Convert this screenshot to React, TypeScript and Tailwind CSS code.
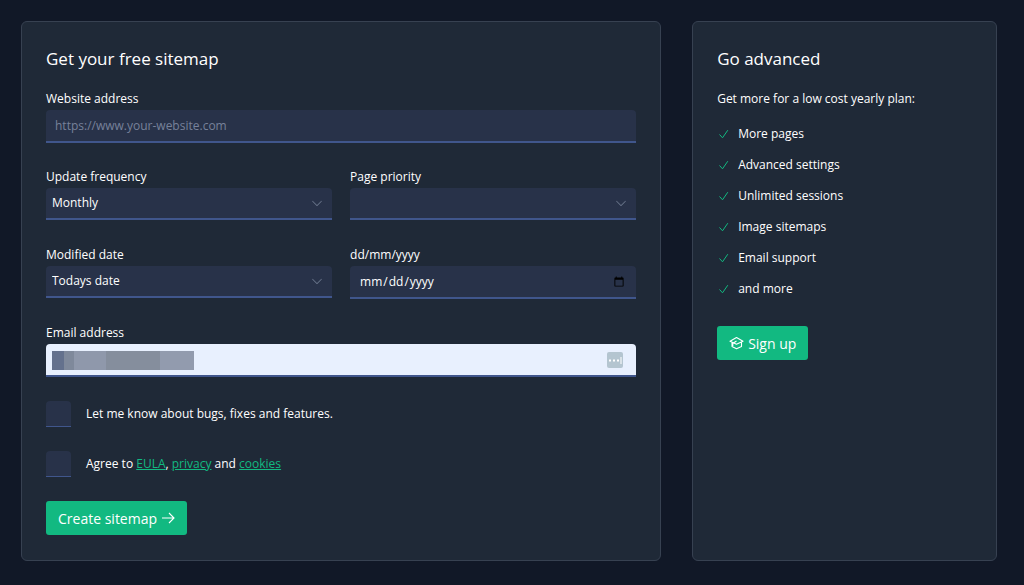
import React from "react";
import { PiCaretDown } from "react-icons/pi";

const fieldClass =
  "block w-full appearance-none rounded-t border-b-2 border-[#40568c] bg-[#283249] text-[12px] text-white outline-none";

const features = [
  "More pages",
  "Advanced settings",
  "Unlimited sessions",
  "Image sitemaps",
  "Email support",
  "and more",
];

const CheckIcon = () => (
  <svg viewBox="0 0 14 14" fill="none" className="size-3.5 text-[#12b981]" aria-hidden="true">
    <path d="M2.5 7.5L5.5 10.8L10.8 3.2" stroke="currentColor" strokeWidth="1" />
  </svg>
);

const ArrowIcon = () => (
  <svg viewBox="0 0 14 14" fill="none" className="size-3.5" aria-hidden="true">
    <path d="M1 7H13M8 2L13 7L8 12" stroke="currentColor" strokeWidth="1.1" />
  </svg>
);

const CapIcon = () => (
  <svg viewBox="0 0 15 14" fill="none" className="h-3.5 w-[15px]" aria-hidden="true">
    <path
      d="M1 5.2L7.5 1.5L14 5.2L7.5 8.2L1 5.2ZM3 6.5V10.5L7.5 12.8L12.5 10.5V6.2M7.5 5L3.8 7.5V10"
      stroke="currentColor"
      strokeWidth="1.1"
      strokeLinejoin="round"
    />
  </svg>
);

type SelectFieldProps = {
  id: string;
  label: string;
  options: string[];
};

const SelectField: React.FC<SelectFieldProps> = ({ id, label, options }) => (
  <div>
    <label htmlFor={id} className="block leading-[22px]">
      {label}
    </label>
    <div className="relative">
      <select id={id} className={`${fieldClass} h-8 pl-1.5 pr-8`}>
        {options.map((option) => (
          <option key={option}>{option}</option>
        ))}
      </select>
      <PiCaretDown className="pointer-events-none absolute top-2 right-2 size-3.5 text-[#69748a]" />
    </div>
  </div>
);

const CheckField: React.FC<{ id: string; children: React.ReactNode }> = ({ id, children }) => (
  <div className="flex items-center gap-[15px]">
    <input
      id={id}
      type="checkbox"
      className="h-[26px] w-[25px] shrink-0 appearance-none rounded-t border-b border-[#40568c] bg-[#283249] checked:bg-[#12b981]"
    />
    <label htmlFor={id} className="leading-5">
      {children}
    </label>
  </div>
);

const App: React.FC = () => {
  return (
    <div className="grid min-h-screen grid-cols-[21fr_10fr] items-start gap-[31px] bg-[#111827] pt-[21px] pr-[27px] pb-6 pl-[21px] font-['Open_Sans',sans-serif] text-[12px] text-white">
      {/* Sitemap form */}
      <form className="self-stretch rounded-md border border-[#374151] bg-[#1f2937] p-6">
        <h2 className="mb-4 text-[17px] leading-[26px]">Get your free sitemap</h2>

        <div className="flex flex-col gap-[23px]">
          <div>
            <label htmlFor="website" className="block leading-[22px]">
              Website address
            </label>
            <input
              id="website"
              type="url"
              placeholder="https://www.your-website.com"
              className={`${fieldClass} h-[33px] px-[9px] placeholder:text-[#77819a]`}
            />
          </div>

          <div className="grid grid-cols-2 gap-x-[18px] gap-y-6">
            <SelectField id="frequency" label="Update frequency" options={["Monthly", "Weekly", "Daily"]} />
            <SelectField id="priority" label="Page priority" options={["", "0.5", "1.0"]} />
            <SelectField id="modified" label="Modified date" options={["Todays date", "Custom date"]} />
            <div>
              <label htmlFor="date" className="block leading-[22px]">
                dd/mm/yyyy
              </label>
              <input id="date" type="date" className={`${fieldClass} h-[33px] px-[9px]`} />
            </div>
          </div>

          <div>
            <label htmlFor="email" className="block leading-[22px]">
              Email address
            </label>
            <div className="relative">
              <input
                id="email"
                type="email"
                className="block h-[33px] w-full rounded-t border-b-2 border-[#40568c] bg-[#e8f0fe] px-2 text-[#111827] outline-none"
              />
              {/* Masked address */}
              <div className="pointer-events-none absolute top-[7px] left-1.5 flex h-[19px] w-[142px] bg-[#868f9f]">
                <span className="w-3 bg-[#64718d]" />
                <span className="w-2.5 bg-[#7f899b]" />
                <span className="w-8 bg-[#8f98ab]" />
                <span className="w-[54px] bg-[#858e9d]" />
                <span className="flex-1 bg-[#929bae]" />
              </div>
              <svg viewBox="0 0 16 16" className="pointer-events-none absolute top-2 right-[13px] size-4">
                <rect width="16" height="16" rx="2" fill="#b4c5d0" />
                <path d="M2 8.5h2M6 8.5h2M10 8.5h2" stroke="#fff" strokeWidth="2" />
                <path d="M14 5v7" stroke="#fff" strokeWidth="1" />
              </svg>
            </div>
          </div>
        </div>

        <div className="my-6 flex flex-col gap-6">
          <CheckField id="updates">Let me know about bugs, fixes and features.</CheckField>
          <CheckField id="agree">
            Agree to{" "}
            <a href="#eula" className="text-[#12b981] underline">EULA</a>,{" "}
            <a href="#privacy" className="text-[#12b981] underline">privacy</a> and{" "}
            <a href="#cookies" className="text-[#12b981] underline">cookies</a>
          </CheckField>
        </div>

        <button type="button" className="flex h-[34px] items-center gap-1 rounded-[3px] bg-[#12b981] px-3 text-[14px]">
          Create sitemap
          <ArrowIcon />
        </button>
      </form>

      {/* Paid plan */}
      <section className="self-stretch rounded-md border border-[#374151] bg-[#1f2937] p-6">
        <h2 className="mb-4 text-[17px] leading-[26px]">Go advanced</h2>
        <p className="leading-[22px]">Get more for a low cost yearly plan:</p>
        <ul className="mt-3.5 flex flex-col gap-[11px]">
          {features.map((feature) => (
            <li key={feature} className="flex items-center gap-[7px] leading-5">
              <CheckIcon />
              {feature}
            </li>
          ))}
        </ul>
        <button type="button" className="mt-[27px] flex h-[34px] items-center gap-1 rounded-[3px] bg-[#12b981] px-3 text-[14px]">
          <CapIcon />
          Sign up
        </button>
      </section>
    </div>
  );
};

export default App;
